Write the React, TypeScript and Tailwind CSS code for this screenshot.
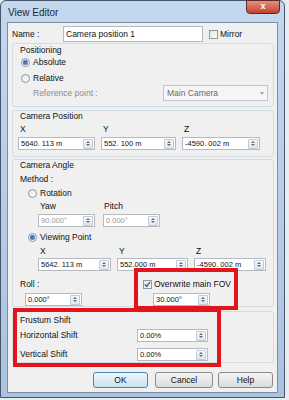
import React from "react";

const font = { fontFamily: '"Liberation Sans", Arial, sans-serif' };

function Spin() {
  return (
    <div className="w-[10px] h-[10px] mr-[1px] border border-[#c3ccd6] rounded-[1px] bg-gradient-to-b from-[#f7f9fb] to-[#dfe6ee] flex flex-col items-center justify-center gap-[1px]">
      <div className="w-0 h-0 border-x-[2px] border-x-transparent border-b-[2px] border-b-[#5f6f80]" />
      <div className="w-0 h-0 border-x-[2px] border-x-transparent border-t-[2px] border-t-[#5f6f80]" />
    </div>
  );
}

function NumInput({ w, value, disabled }: { w: string; value: string; disabled?: boolean }) {
  return (
    <div
      className={`${w} h-[13px] border border-[#b5b9c0] bg-white flex items-center justify-between`}
    >
      <span className={`pl-[2px] text-[7.5px] leading-none ${disabled ? "text-[#9a9a9a]" : "text-[#111]"}`}>
        {value}
      </span>
      <Spin />
    </div>
  );
}

function Radio({ on, label }: { on?: boolean; label: string }) {
  return (
    <div className="flex items-center h-[12px]">
      <div className="w-[9px] h-[9px] rounded-full border border-[#8a96a3] bg-gradient-to-br from-[#e6e9ec] to-[#fafafa] flex items-center justify-center">
        {on && <div className="w-[5px] h-[5px] rounded-full bg-gradient-to-br from-[#2f5f93] to-[#5b9ad6]" />}
      </div>
      <span className="ml-[3px]">{label}</span>
    </div>
  );
}

function Check({ on }: { on?: boolean }) {
  return (
    <div className="w-[9px] h-[9px] border border-[#8f98a2] bg-gradient-to-br from-[#e2e5e8] to-[#fbfbfb] flex items-center justify-center">
      {on && (
        <svg width="7" height="7" viewBox="0 0 7 7">
          <path d="M1 3.5 L2.8 5.5 L6 1.2" stroke="#3b5f8a" strokeWidth="1.4" fill="none" />
        </svg>
      )}
    </div>
  );
}

function Btn({ label, w, focus }: { label: string; w: string; focus?: boolean }) {
  return (
    <div
      className={`${w} h-[16px] rounded-[3px] border flex items-center justify-center text-[8.5px] ${
        focus
          ? "border-[#4a86b8] bg-gradient-to-b from-[#eef7fc] to-[#c9e2f3]"
          : "border-[#8a8a8a] bg-gradient-to-b from-[#f4f4f4] to-[#dcdcdc]"
      }`}
    >
      {label}
    </div>
  );
}

export default function App() {
  return (
    <div className="w-[289px] h-[400px] bg-[#e8edf2] overflow-hidden text-[8.5px] text-[#111]" style={font}>
      <div className="w-[285px] h-[398px] rounded-t-[6px] border border-[#46566a] bg-gradient-to-b from-[#c3d8ee] to-[#aac3de] px-[6px] pb-[4px] flex flex-col">
        {/* title bar */}
        <div className="h-[21px] flex justify-between">
          <span className="text-[10px] text-[#1b2a3c] mt-[4px] ml-[1px]">View Editor</span>
          <div className="w-[34px] h-[14px] -mt-[1px] -mr-[2px] rounded-b-[4px] border border-[#5e2a24] bg-gradient-to-b from-[#e2917f] to-[#c2402c] flex items-center justify-center text-white text-[9px] font-bold">
            x
          </div>
        </div>

        {/* client area */}
        <div className="relative w-[271px] h-[371px] border border-[#7d8ea3] bg-[#f0f0f0] flex flex-col">
          {/* name row */}
          <div className="mt-[3px] h-[16px] flex items-center">
            <span className="ml-[4px] w-[51px]">Name :</span>
            <div className="w-[140px] h-[16px] border border-[#b5b9c0] bg-white flex items-center pl-[2px]">
              Camera position 1
            </div>
            <div className="ml-[6px]">
              <Check />
            </div>
            <span className="ml-[2px]">Mirror</span>
          </div>

          {/* Positioning */}
          <div className="mt-[1px] ml-[4px] w-[262px] h-[64px] rounded-[3px] border border-[#d3dce3] flex flex-col">
            <div className="mt-[1px] ml-[7px] h-[10px] leading-[10px]">Positioning</div>
            <div className="mt-[1px] ml-[8px]">
              <Radio on label="Absolute" />
            </div>
            <div className="mt-[4px] ml-[8px]">
              <Radio label="Relative" />
            </div>
            <div className="mt-[1px] h-[16px] flex items-center">
              <span className="ml-[20px] w-[130px] text-[#8d8d8d]">Reference point :</span>
              <div className="w-[105px] h-[16px] border border-[#c2c6cc] bg-[#f6f6f6] flex items-center justify-between px-[3px] text-[#6b6b6b]">
                <span>Main Camera</span>
                <div className="w-0 h-0 border-x-[2.5px] border-x-transparent border-t-[3px] border-t-[#9aa3ad]" />
              </div>
            </div>
          </div>

          {/* Camera Position */}
          <div className="mt-[3px] ml-[4px] w-[262px] h-[47px] rounded-[3px] border border-[#d3dce3] flex flex-col">
            <div className="ml-[7px] h-[10px] leading-[10px]">Camera Position</div>
            <div className="flex mt-[3px] ml-[5px] gap-[6px]">
              <div className="flex flex-col gap-[3px]">
                <span className="ml-[2px] h-[10px] leading-[10px]">X</span>
                <NumInput w="w-[77px]" value="5640. 113 m" />
              </div>
              <div className="flex flex-col gap-[3px]">
                <span className="ml-[2px] h-[10px] leading-[10px]">Y</span>
                <NumInput w="w-[75px]" value="552. 100 m" />
              </div>
              <div className="flex flex-col gap-[3px]">
                <span className="ml-[2px] h-[10px] leading-[10px]">Z</span>
                <NumInput w="w-[78px]" value="-4590. 002 m" />
              </div>
            </div>
          </div>

          {/* Camera Angle */}
          <div className="mt-[2px] ml-[4px] w-[262px] h-[148px] rounded-[3px] border border-[#d3dce3] flex flex-col">
            <div className="ml-[7px] h-[10px] leading-[10px]">Camera Angle</div>
            <div className="mt-[4px] ml-[7px] h-[10px] leading-[10px]">Method :</div>
            <div className="mt-[3px] ml-[15px]">
              <Radio label="Rotation" />
            </div>
            <div className="flex mt-[2px] ml-[25px] gap-[8px]">
              <div className="flex flex-col gap-[3px]">
                <span className="ml-[2px] h-[10px] leading-[10px]">Yaw</span>
                <NumInput w="w-[57px]" value="90.000°" disabled />
              </div>
              <div className="flex flex-col gap-[3px]">
                <span className="ml-[1px] h-[10px] leading-[10px]">Pitch</span>
                <NumInput w="w-[57px]" value="0.000°" disabled />
              </div>
            </div>
            <div className="mt-[4px] ml-[15px]">
              <Radio on label="Viewing Point" />
            </div>
            <div className="flex mt-[3px] ml-[25px] gap-[6px]">
              <div className="flex flex-col gap-[2px]">
                <span className="ml-[2px] h-[10px] leading-[10px]">X</span>
                <NumInput w="w-[73px]" value="5642. 113 m" />
              </div>
              <div className="flex flex-col gap-[2px]">
                <span className="ml-[2px] h-[10px] leading-[10px]">Y</span>
                <NumInput w="w-[71px]" value="552.000 m" />
              </div>
              <div className="flex flex-col gap-[2px]">
                <span className="ml-[2px] h-[10px] leading-[10px]">Z</span>
                <NumInput w="w-[72px]" value="-4590. 002 m" />
              </div>
            </div>
            <div className="flex mt-[7px]">
              <div className="flex flex-col">
                <span className="ml-[7px] h-[12px] leading-[12px]">Roll :</span>
                <div className="mt-[3px] ml-[12px]">
                  <NumInput w="w-[57px]" value="0.000°" />
                </div>
              </div>
              <div className="flex flex-col ml-[61px]">
                <div className="flex items-center h-[12px]">
                  <Check on />
                  <span className="ml-[2px]">Overwrite main FOV</span>
                </div>
                <div className="mt-[3px] ml-[10px]">
                  <NumInput w="w-[57px]" value="30.000°" />
                </div>
              </div>
            </div>
          </div>

          {/* Frustum Shift */}
          <div className="mt-[4px] ml-[4px] w-[262px] h-[52px] rounded-[3px] border border-[#d3dce3] flex flex-col">
            <div className="mt-[3px] ml-[7px] h-[10px] leading-[10px]">Frustum Shift</div>
            <div className="mt-[4px] flex items-center">
              <span className="ml-[7px] w-[117px]">Horizontal Shift</span>
              <NumInput w="w-[71px]" value="0.00%" />
            </div>
            <div className="mt-[6px] flex items-center">
              <span className="ml-[7px] w-[117px]">Vertical Shift</span>
              <NumInput w="w-[71px]" value="0.00%" />
            </div>
          </div>

          {/* buttons */}
          <div className="mt-[9px] flex">
            <div className="ml-[85px]">
              <Btn label="OK" w="w-[55px]" focus />
            </div>
            <div className="ml-[7px]">
              <Btn label="Cancel" w="w-[58px]" />
            </div>
            <div className="ml-[5px]">
              <Btn label="Help" w="w-[55px]" />
            </div>
          </div>

          {/* red highlight annotations */}
          <div className="absolute left-[126px] top-[245px] w-[104px] h-[42px] border-[4px] border-[#e3141c]" />
          <div className="absolute left-[5px] top-[285px] w-[208px] h-[59px] border-[4px] border-[#e3141c]" />
        </div>
      </div>
    </div>
  );
}
